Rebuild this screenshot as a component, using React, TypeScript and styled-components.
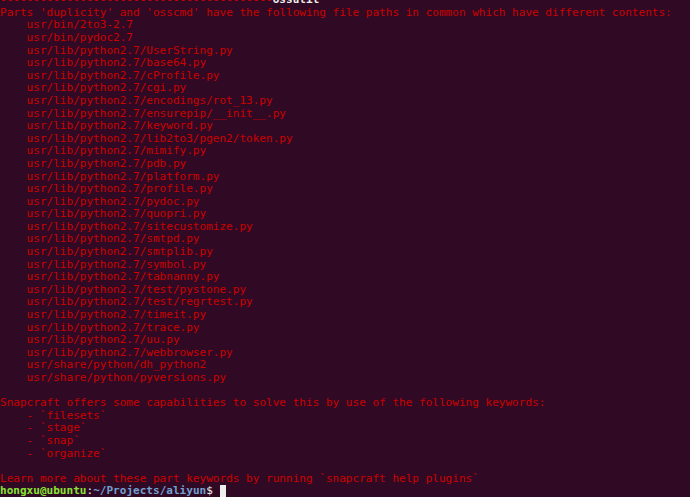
import React from "react";
import styled, { createGlobalStyle } from "styled-components";

const Global = createGlobalStyle`
  html, body { margin: 0; padding: 0; background: #300a24; overflow: hidden; }
  body { width: 690px; height: 497px; }
`;

const Terminal = styled.div`
  width: 690px;
  height: 497px;
  background: #300a24;
  overflow: hidden;
  font-family: "DejaVu Sans Mono", "Liberation Mono", monospace;
  font-size: 11.06px;
  line-height: 12.6px;
  color: #cc0000;
`;

const Lines = styled.div`
  display: flex;
  flex-direction: column;
  margin-top: -5.8px;
`;

const Line = styled.div<{ $indent?: boolean }>`
  height: 12.6px;
  white-space: pre;
  padding-left: ${(p) => (p.$indent ? "26.6px" : "0")};
`;

const Bright = styled.span`
  color: #eeeeec;
  font-weight: bold;
`;

const User = styled.span`
  color: #8ae234;
  font-weight: bold;
`;

const Path = styled.span`
  color: #729fcf;
  font-weight: bold;
`;

const Plain = styled.span`
  color: #eeeeec;
`;

const Cursor = styled.span`
  display: inline-block;
  width: 6.6px;
  height: 12.6px;
  background: #eeeeec;
  vertical-align: top;
`;

const files = [
  "usr/bin/2to3-2.7",
  "usr/bin/pydoc2.7",
  "usr/lib/python2.7/UserString.py",
  "usr/lib/python2.7/base64.py",
  "usr/lib/python2.7/cProfile.py",
  "usr/lib/python2.7/cgi.py",
  "usr/lib/python2.7/encodings/rot_13.py",
  "usr/lib/python2.7/ensurepip/__init__.py",
  "usr/lib/python2.7/keyword.py",
  "usr/lib/python2.7/lib2to3/pgen2/token.py",
  "usr/lib/python2.7/mimify.py",
  "usr/lib/python2.7/pdb.py",
  "usr/lib/python2.7/platform.py",
  "usr/lib/python2.7/profile.py",
  "usr/lib/python2.7/pydoc.py",
  "usr/lib/python2.7/quopri.py",
  "usr/lib/python2.7/sitecustomize.py",
  "usr/lib/python2.7/smtpd.py",
  "usr/lib/python2.7/smtplib.py",
  "usr/lib/python2.7/symbol.py",
  "usr/lib/python2.7/tabnanny.py",
  "usr/lib/python2.7/test/pystone.py",
  "usr/lib/python2.7/test/regrtest.py",
  "usr/lib/python2.7/timeit.py",
  "usr/lib/python2.7/trace.py",
  "usr/lib/python2.7/uu.py",
  "usr/lib/python2.7/webbrowser.py",
  "usr/share/python/dh_python2",
  "usr/share/python/pyversions.py",
];

const keywords = ["filesets", "stage", "snap", "organize"];

export default function App() {
  return (
    <>
      <Global />
      <Terminal>
        <Lines>
          <Line>
            {"-".repeat(41)}
            <Bright>ossutil</Bright>
          </Line>
          <Line>
            Parts 'duplicity' and 'osscmd' have the following file paths in common which have different contents:
          </Line>
          {files.map((f) => (
            <Line key={f} $indent>
              {f}
            </Line>
          ))}
          <Line> </Line>
          <Line>Snapcraft offers some capabilities to solve this by use of the following keywords:</Line>
          {keywords.map((k) => (
            <Line key={k} $indent>
              {"- `" + k + "`"}
            </Line>
          ))}
          <Line> </Line>
          <Line>Learn more about these part keywords by running `snapcraft help plugins`</Line>
          <Line>
            <User>hongxu@ubuntu</User>
            <Plain>:</Plain>
            <Path>~/Projects/aliyun</Path>
            <Plain>$ </Plain>
            <Cursor />
          </Line>
        </Lines>
      </Terminal>
    </>
  );
}
